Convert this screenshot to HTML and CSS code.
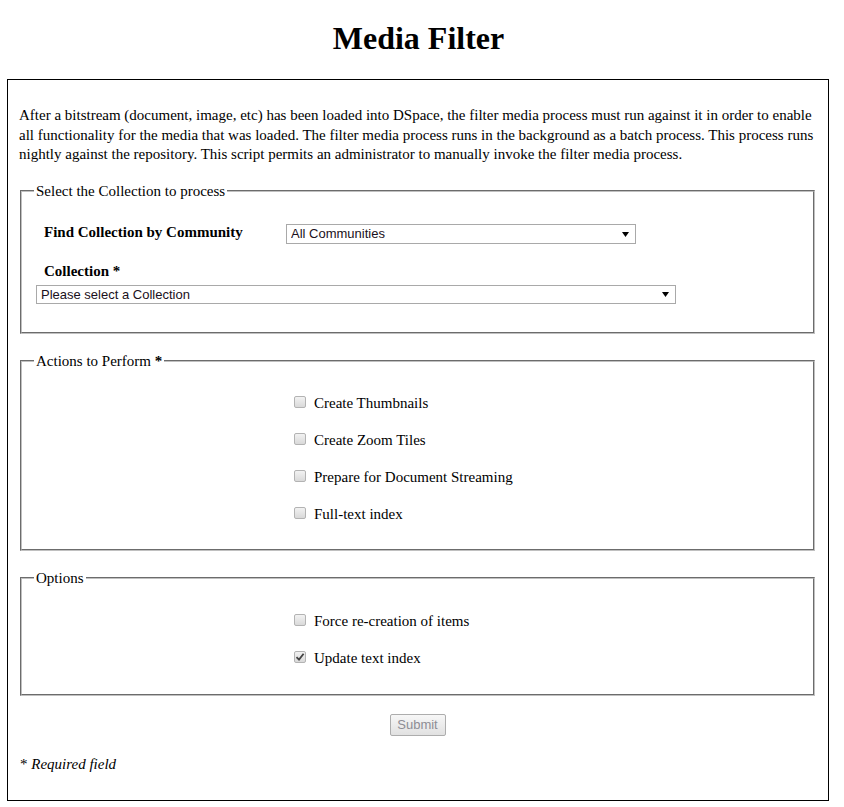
FILE: index.html
```html
<!DOCTYPE html>
<html lang="en">
<head>
<meta charset="utf-8">
<title>Media Filter</title>
<link rel="stylesheet" href="styles.css">
</head>
<body>
<h1 class="title">Media Filter</h1>
<form class="panel">
  <p class="intro">After a bitstream (document, image, etc) has been loaded into DSpace, the filter media process must run against it in order to enable all functionality for the media that was loaded. The filter media process runs in the background as a batch process. This process runs nightly against the repository. This script permits an administrator to manually invoke the filter media process.</p>

  <fieldset class="group group-collection">
    <legend class="legend">Select the Collection to process</legend>
    <div class="find-row">
      <label class="field-label find-label" for="community">Find Collection by Community</label>
      <div class="select-wrap select-community">
        <select id="community" class="select"><option>All Communities</option></select>
        <svg class="caret" width="7" height="5" viewBox="0 0 7 5"><path d="M0 0H7L3.5 5Z" fill="#000"/></svg>
      </div>
    </div>
    <label class="field-label collection-label" for="collection">Collection *</label>
    <div class="select-wrap select-collection">
      <select id="collection" class="select"><option>Please select a Collection</option></select>
      <svg class="caret" width="7" height="5" viewBox="0 0 7 5"><path d="M0 0H7L3.5 5Z" fill="#000"/></svg>
    </div>
  </fieldset>

  <fieldset class="group group-actions">
    <legend class="legend">Actions to Perform <b>*</b></legend>
    <div class="checks">
      <label class="check-row"><input type="checkbox" class="check"><span>Create Thumbnails</span></label>
      <label class="check-row"><input type="checkbox" class="check"><span>Create Zoom Tiles</span></label>
      <label class="check-row"><input type="checkbox" class="check"><span>Prepare for Document Streaming</span></label>
      <label class="check-row"><input type="checkbox" class="check"><span>Full-text index</span></label>
    </div>
  </fieldset>

  <fieldset class="group group-options">
    <legend class="legend">Options</legend>
    <div class="checks">
      <label class="check-row"><input type="checkbox" class="check"><span>Force re-creation of items</span></label>
      <label class="check-row"><input type="checkbox" class="check" checked><span>Update text index</span></label>
    </div>
  </fieldset>

  <div class="actions">
    <button type="submit" class="submit" disabled>Submit</button>
  </div>

  <p class="required">* <i>Required field</i></p>
</form>
</body>
</html>
```

FILE: styles.css
```css
html, body {
  margin: 0;
  padding: 0;
  background: #fff;
}

body {
  font-family: "Liberation Serif", "Times New Roman", serif;
  font-size: 15px;
  color: #000;
}

.title {
  margin: 0;
  padding-top: 20px;
  font-size: 32px;
  line-height: 37px;
  font-weight: bold;
  text-align: center;
  width: 837px;
}

.panel {
  margin: 22px 0 0 7px;
  width: 822px;
  box-sizing: border-box;
  border: 1px solid #000;
  padding: 26px 13px 27px 12px;
}

.intro {
  margin: 0 0 0 -1px;
  line-height: 19.5px;
}

.group {
  margin: 0;
  border: 2px groove #c0c0c0;
  min-width: 0;
}

.group-collection {
  margin-top: 18px;
  padding: 24px 0 28px 0;
}

.group-actions {
  margin-top: 19px;
  padding: 25px 0 26px 0;
}

.group-options {
  margin-top: 19px;
  padding: 26px 0 27px 0;
}

.legend {
  margin-left: 12px;
  padding: 0 2px;
  line-height: 17px;
  font-size: 15px;
}

.find-row {
  display: flex;
  align-items: center;
  padding-left: 22px;
}

.field-label {
  font-weight: bold;
  line-height: 17px;
}

.find-label {
  width: 242px;
  flex: none;
  margin-top: -3px;
}

.collection-label {
  display: block;
  margin: 19px 0 0 22px;
}

.select-wrap {
  position: relative;
  width: fit-content;
}

.select {
  appearance: none;
  -webkit-appearance: none;
  display: block;
  box-sizing: border-box;
  margin: 0;
  border: 1px solid #a9a9a9;
  border-radius: 0;
  background: #fff;
  font-family: "Liberation Sans", Arial, sans-serif;
  font-size: 13px;
  color: #1a1020;
  padding: 0 20px 0 4px;
}

.select-community .select {
  width: 350px;
  height: 20px;
}

.select-collection {
  margin: 5px 0 0 14px;
}

.select-collection .select {
  width: 640px;
  height: 19px;
}

.caret {
  position: absolute;
  right: 7px;
  top: 50%;
  margin-top: -2px;
  pointer-events: none;
}

.checks {
  padding-left: 272px;
  display: flex;
  flex-direction: column;
  gap: 20px;
}

.check-row {
  display: flex;
  align-items: center;
  height: 17px;
  line-height: 17px;
}

.check {
  appearance: none;
  -webkit-appearance: none;
  flex: none;
  width: 12px;
  height: 12px;
  margin: 0 8px 0 0;
  box-sizing: border-box;
  border: 1px solid #b3b3b3;
  border-radius: 2px;
  background: linear-gradient(#f2f2f2, #d9d9d9);
  position: relative;
  top: -1px;
}

.check:checked {
  background-image: url("data:image/svg+xml,%3Csvg xmlns='http://www.w3.org/2000/svg' width='10' height='10' viewBox='0 0 10 10'%3E%3Cpath d='M1.5 5.2 L4 7.6 L8.6 1.8' fill='none' stroke='%23444' stroke-width='1.8'/%3E%3C/svg%3E"), linear-gradient(#f2f2f2, #d9d9d9);
  background-repeat: no-repeat;
  background-position: center, 0 0;
}

.actions {
  margin-top: 18px;
  text-align: center;
}

.submit {
  width: 56px;
  height: 22px;
  padding: 0;
  border: 1px solid #adadad;
  border-radius: 2px;
  background: linear-gradient(#f7f7f7, #e1e1e1);
  font-family: "Liberation Sans", Arial, sans-serif;
  font-size: 13px;
  color: #8d8d95;
}

.required {
  margin: 20px 0 0 0;
  line-height: 17px;
}
```
